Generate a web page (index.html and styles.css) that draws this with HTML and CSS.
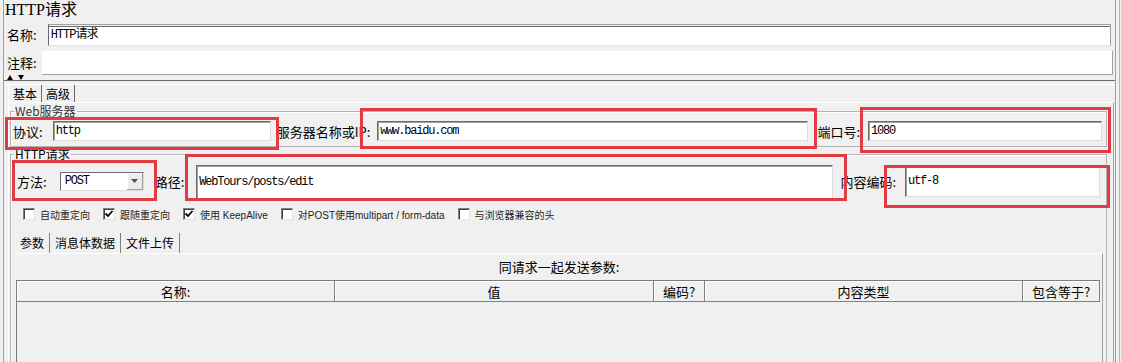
FILE: index.html
```html
<!DOCTYPE html>
<html>
<head>
	<meta charset="UTF-8">
	<title>HTTP请求</title>
	<link rel="stylesheet" href="styles.css">
</head>
<body>
	<div class="frame">
		<div class="title">HTTP请求</div>
		<div class="name-row">
			<span class="lbl">名称:</span>
			<div class="name-field">HTTP请求</div>
		</div>
		<div class="note-row">
			<span class="lbl">注释:</span>
			<div class="note-area"></div>
		</div>
		<div class="splitter">
			<svg width="20" height="5" viewBox="0 0 20 5"><polygon points="0,5 3,0 6,5"/><polygon points="11,0 17,0 14,5"/></svg>
		</div>
		<div class="tabs">
			<span class="tab on">基本</span><span class="tab">高级</span>
		</div>
		<div class="tabpane">
			<fieldset class="group">
				<legend class="legend-web">Web服务器</legend>
				<div class="row row-server">
					<span class="lbl l-proto">协议:</span>
					<div class="field proto">http</div>
					<span class="lbl l-host">服务器名称或IP:</span>
					<div class="field host">www.baidu.com</div>
					<span class="lbl l-port">端口号:</span>
					<div class="field port">1080</div>
				</div>
			</fieldset>
			<fieldset class="group http">
				<legend>HTTP请求</legend>
				<div class="row row-req">
					<span class="lbl l-method">方法:</span>
					<div class="combo">
						<span class="combo-text">POST</span>
						<span class="combo-btn"><svg width="7" height="4" viewBox="0 0 7 4"><polygon points="0,0 7,0 3.5,4"/></svg></span>
					</div>
					<span class="lbl l-path">路径:</span>
					<div class="field path">WebTours/posts/edit</div>
					<span class="lbl l-enc">内容编码:</span>
					<div class="field enc">utf-8</div>
				</div>
				<div class="checks">
					<label class="check"><span class="box"></span>自动重定向</label>
					<label class="check"><span class="box"><svg width="10" height="10" viewBox="0 0 10 10"><polyline points="1.5,4.5 4,7 8.5,2" /></svg></span>跟随重定向</label>
					<label class="check"><span class="box"><svg width="10" height="10" viewBox="0 0 10 10"><polyline points="1.5,4.5 4,7 8.5,2" /></svg></span>使用 KeepAlive</label>
					<label class="check"><span class="box"></span>对POST使用multipart / form-data</label>
					<label class="check"><span class="box"></span>与浏览器兼容的头</label>
				</div>
				<div class="subtabs">
					<span class="subtab on">参数</span><span class="subtab">消息体数据</span><span class="subtab">文件上传</span>
				</div>
				<div class="params">
					<div class="caption">同请求一起发送参数:</div>
					<table class="grid">
						<colgroup>
							<col class="c-name"><col class="c-value"><col class="c-enc"><col class="c-type"><col class="c-eq">
						</colgroup>
						<tr>
							<th>名称:</th>
							<th>值</th>
							<th>编码?</th>
							<th>内容类型</th>
							<th>包含等于?</th>
						</tr>
						<tr class="empty"><td colspan="5"></td></tr>
					</table>
				</div>
			</fieldset>
		</div>
	</div>

	<div class="mark m-proto"></div>
	<div class="mark m-host"></div>
	<div class="mark m-port"></div>
	<div class="mark m-method"></div>
	<div class="mark m-path"></div>
	<div class="mark m-enc"></div>
</body>
</html>
```

FILE: styles.css
```css
body{
	margin: 0;
	width: 1121px;
	height: 362px;
	overflow: hidden;
	position: relative;
	background: #f0f0f0;
	color: #000;
	font-family: "Noto Sans CJK SC", sans-serif;
	font-size: 13px;
}
.frame{
	margin-left: 3px;
	width: 1113px;
	height: 362px;
	overflow: hidden;
	box-sizing: border-box;
	border-left: 1px solid #a0a0a0;
	border-right: 1px solid #a0a0a0;
	box-shadow: 3px 0 0 #f0f0f0, 4px 0 0 #b4b4b4;
}
.title{
	height: 24px;
	line-height: 20px;
	padding-left: 1px;
	font-family: "Liberation Serif", "Noto Sans CJK SC", serif;
	font-size: 16px;
}
.lbl{
	white-space: nowrap;
}

/* 名称 / 注释 */
.name-row{
	display: flex;
	height: 23px;
}
.name-row .lbl{
	padding-left: 3px;
	margin-right: 11px;
	line-height: 22px;
}
.name-field{
	flex: 1;
	height: 22px;
	margin-right: 4px;
	box-sizing: border-box;
	padding-left: 2px;
	background: #fff;
	border-top: 1px solid #a0a0a0;
	border-left: 1px solid #696969;
	border-right: 1px solid #a0a0a0;
	border-bottom: 1px solid #e3e3e3;
	box-shadow: inset 0 1px 0 #f0f0f0, inset 0 2px 0 #696969;
	font-family: "Liberation Mono", "Noto Sans CJK SC", monospace;
	font-size: 12px;
	letter-spacing: -1px;
	line-height: 20px;
}
.note-row{
	display: flex;
	height: 28px;
}
.note-row .lbl{
	padding: 4px 0 0 3px;
	margin-right: 5px;
	line-height: 24px;
}
.note-area{
	flex: 1;
	height: 24px;
	margin: 4px 2px 0 0;
	box-sizing: border-box;
	background: #fff;
	border-right: 1px solid #a0a0a0;
	border-bottom: 1px solid #a0a0a0;
}
.splitter{
	height: 5px;
	border-bottom: 1px solid #696969;
}
.splitter svg{
	display: block;
	margin-left: 3px;
	fill: #000;
}

/* 基本 / 高级 */
.tabs{
	display: flex;
	height: 17px;
	margin-top: 3px;
	padding-left: 4px;
	border-top: 1px solid #fff;
}
.tab{
	padding: 0 4px;
	font-size: 12px;
	line-height: 17px;
	border-right: 1px solid #696969;
}
.tab.on{
	border-left: 1px solid #fff;
}
.tabpane{
	margin: 0 1px 0 4px;
	padding: 2px 6px 0 1px;
	border-top: 1px solid #fff;
	border-left: 1px solid #fff;
	border-right: 1px solid #a0a0a0;
}

/* fieldsets */
.group{
	margin: 0;
	padding: 0 0 3px;
	min-width: 0;
	border: 1px solid #b4b4b4;
	box-shadow: inset 1px 1px 0 #fff;
}
.group legend{
	margin-left: 3px;
	padding: 0 1px;
	font-size: 12px;
	line-height: 12px;
}
.legend-web{
	color: #333;
}
.group.http{
	margin-top: 1px;
	padding-bottom: 0;
}
.row{
	display: flex;
	align-items: center;
}
.field{
	height: 20px;
	box-sizing: border-box;
	padding-left: 2px;
	background: #fff;
	border: 1px solid;
	border-color: #6d6d6d #dcdcdc #dcdcdc #6d6d6d;
	box-shadow: inset 1px 1px 0 #a0a0a0;
	font-family: "Liberation Mono", monospace;
	font-size: 12px;
	letter-spacing: -1.2px;
	line-height: 18px;
	white-space: nowrap;
}
.row-server{
	height: 24px;
	padding: 2px 4px 0 2px;
}
.l-proto{ margin-right: 10px; }
.proto{ width: 218px; margin-right: 6px; }
.l-host{ margin-right: 7px; }
.host{ flex: 1; margin-right: 9px; }
.l-port{ margin-right: 8px; }
.port{ width: 234px; }

.row-req{
	height: 35px;
	padding: 4px 6px 0 6px;
}
.l-method{ margin-right: 13px; }
.combo{
	display: flex;
	width: 84px;
	height: 19px;
	margin-right: 11px;
	box-sizing: border-box;
	background: #fff;
	border: 1px solid;
	border-color: #6d6d6d #dcdcdc #dcdcdc #6d6d6d;
}
.combo-text{
	flex: 1;
	padding-left: 4px;
	font-family: "Liberation Mono", monospace;
	font-size: 12px;
	letter-spacing: -1.2px;
	line-height: 17px;
}
.combo-btn{
	display: flex;
	align-items: center;
	justify-content: center;
	width: 16px;
	box-sizing: border-box;
	background: #ececec;
	border-right: 1px solid #a0a0a0;
	border-bottom: 1px solid #a0a0a0;
	box-shadow: inset 1px 1px 0 #fff;
}
.combo-btn svg{
	fill: #505050;
}
.l-path{ margin-right: 12px; }
.path{ flex: 1; height: 34px; margin-right: 7px; line-height: 32px; }
.l-enc{ margin-right: 9px; }
.enc{ width: 195px; height: 31px; line-height: 29px; }

/* checkboxes */
.checks{
	display: flex;
	align-items: center;
	gap: 13px;
	height: 20px;
	margin-top: 5px;
	padding-left: 12px;
	font-family: "Liberation Sans", "Noto Sans CJK SC", sans-serif;
	font-size: 10px;
	color: #1e1e1e;
}
.check{
	display: flex;
	align-items: center;
	gap: 5px;
	white-space: nowrap;
}
.box{
	display: flex;
	width: 12px;
	height: 12px;
	box-sizing: border-box;
	background: #fff;
	border: 1px solid;
	border-color: #808080 #e3e3e3 #e3e3e3 #808080;
	box-shadow: inset 1px 1px 0 #404040;
}
.box svg{
	fill: none;
	stroke: #000;
	stroke-width: 1.8;
}

/* 参数 tabs */
.subtabs{
	display: flex;
	height: 20px;
	margin-top: 9px;
	padding-left: 4px;
	font-size: 12px;
}
.subtab{
	padding: 0 5px;
	line-height: 20px;
	border-right: 1px solid #808080;
}
.params{
	height: 109px;
	margin: 0 3px 0 4px;
	padding-left: 1px;
	border-top: 1px solid #fff;
	border-right: 1px solid #a0a0a0;
}
.caption{
	height: 26px;
	line-height: 26px;
	text-align: center;
}
.grid{
	width: 1083px;
	table-layout: fixed;
	border-collapse: collapse;
	border-top: 1px solid #7a7a7a;
	border-left: 1px solid #7a7a7a;
}
.c-name{ width: 318px; }
.c-value{ width: 319px; }
.c-enc{ width: 51px; }
.c-type{ width: 318px; }
.c-eq{ width: 77px; }
.grid th{
	height: 20px;
	padding: 0;
	font-weight: normal;
	font-size: 13px;
	line-height: 19px;
	border-right: 1px solid #808080;
	border-bottom: 1px solid #808080;
	box-shadow: inset 1px 1px 0 #fff;
}
.grid .empty td{
	height: 62px;
	padding: 0;
}

/* red annotation boxes */
.mark{
	position: absolute;
	box-sizing: border-box;
	border: 3px solid #e33b44;
}
.m-proto{ left: 5px; top: 117px; width: 274px; height: 33px; }
.m-host{ left: 360px; top: 108px; width: 457px; height: 41px; }
.m-port{ left: 860px; top: 107px; width: 251px; height: 46px; }
.m-method{ left: 12px; top: 160px; width: 145px; height: 41px; }
.m-path{ left: 185px; top: 154px; width: 662px; height: 47px; }
.m-enc{ left: 884px; top: 165px; width: 226px; height: 43px; }
```
